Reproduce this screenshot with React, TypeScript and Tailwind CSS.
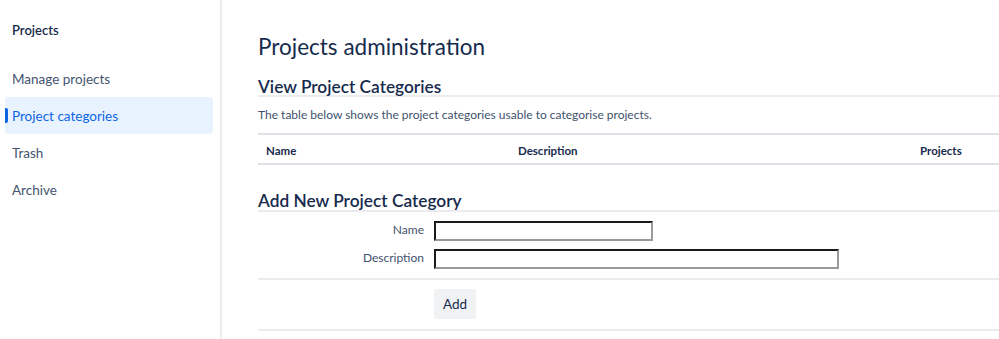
import React from "react";

const navItems = ["Manage projects", "Project categories", "Trash", "Archive"];

export default function App() {
  return (
    <div
      className="flex h-[339px] w-[999px] overflow-hidden bg-white text-[#172b4d]"
      style={{ fontFamily: 'Lato, "Open Sans", sans-serif' }}
    >
      <aside className="w-[222px] shrink-0 border-r-2 border-[#ebecf0]">
        <div className="pl-3 pt-5 text-[13px] leading-5 font-semibold text-[#172b4d]">Projects</div>
        <nav className="mt-5 flex flex-col pl-[5px] pr-[7px]">
          {navItems.map((item) => {
            const active = item === "Project categories";
            return (
              <div
                key={item}
                className={
                  active
                    ? "relative flex h-[37px] items-center rounded-[3px] bg-[#e9f2ff] pl-[7px] pt-[2px] text-[13.5px] text-[#0c66e4]"
                    : "relative flex h-[37px] items-center pl-[7px] pt-[2px] text-[13.5px] text-[#44546f]"
                }
              >
                {active && (
                  <span className="absolute left-0 top-[11px] h-[15px] w-[3px] rounded-r-[2px] bg-[#0c66e4]" />
                )}
                {item}
              </div>
            );
          })}
        </nav>
      </aside>

      <main className="flex-1 pl-[36px]">
        <h1 className="mt-[31px] text-[22.5px] leading-8 font-normal text-[#172b4d]">Projects administration</h1>
        <h2 className="mt-[15px] border-b-2 border-[#ebecf0] text-[17.3px] leading-[17px] font-semibold text-[#172b4d]">
          View Project Categories
        </h2>
        <p className="mt-[8px] text-[12px] leading-5 text-[#42526e]">
          The table below shows the project categories usable to categorise projects.
        </p>
        <div className="mt-[8px] grid h-[32px] grid-cols-[252px_402px_1fr] items-center border-y-2 border-[#dfe1e6] pt-[4px] text-[11.5px] font-bold text-[#172b4d]">
          <div className="pl-2">Name</div>
          <div className="pl-2">Description</div>
          <div className="pl-2">Projects</div>
        </div>

        <h2 className="mt-[27px] border-b-2 border-[#ebecf0] text-[17.3px] leading-[18px] font-semibold text-[#172b4d]">
          Add New Project Category
        </h2>
        <div className="border-b-2 border-[#ebecf0] pt-[9px] pb-[9px]">
          <div className="flex h-[20px] items-center gap-[10px]">
            <label className="w-[166px] pb-[2px] text-right text-[12px] text-[#42526e]">Name</label>
            <input className="h-[20px] w-[219px] border-2 border-t-[#1a1a1a] border-l-[#1a1a1a] border-r-[#9a9a9a] border-b-[#9a9a9a] bg-white outline-none" />
          </div>
          <div className="mt-[8px] flex h-[20px] items-center gap-[10px]">
            <label className="w-[166px] pb-[2px] text-right text-[12px] text-[#42526e]">Description</label>
            <input className="h-[20px] w-[405px] border-2 border-t-[#1a1a1a] border-l-[#1a1a1a] border-r-[#9a9a9a] border-b-[#9a9a9a] bg-white outline-none" />
          </div>
        </div>
        <div className="border-b-2 border-[#ebecf0] pt-[9px] pb-[10px] pl-[176px]">
          <button className="h-[30px] w-[42px] rounded-[3px] bg-[#f1f2f4] text-[13.5px] text-[#172b4d]">Add</button>
        </div>
      </main>
    </div>
  );
}
